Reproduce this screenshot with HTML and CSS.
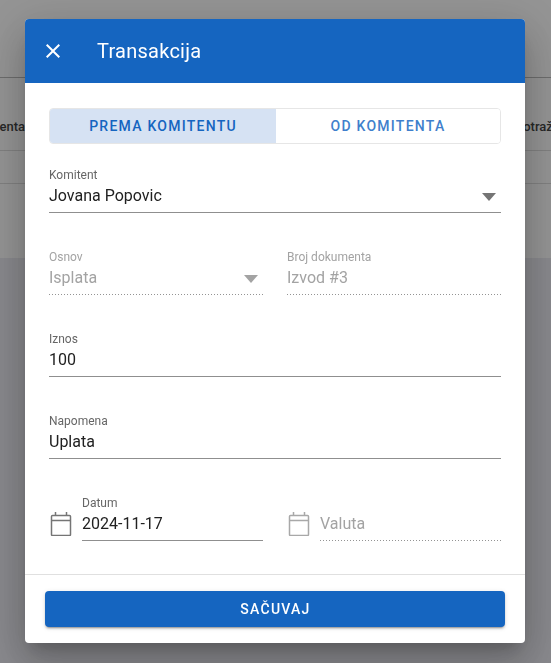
FILE: index.html
```html
<!DOCTYPE html>
<html lang="sr">
<head>
<meta charset="utf-8">
<title>Transakcija</title>
<link rel="stylesheet" href="styles.css">
</head>
<body>
<div class="page">
  <div class="page-top"></div>
  <div class="page-row page-row-head">
    <span class="cell cell-left">Komitenta</span>
    <span class="cell cell-right">Potražuje</span>
  </div>
  <div class="page-row page-row-sum"></div>
  <div class="page-row page-row-empty"></div>
</div>
<div class="overlay">
  <section class="dialog">
    <header class="dialog-head">
      <svg class="close-icon" viewBox="0 0 24 24" aria-hidden="true"><path d="M19 6.41 17.59 5 12 10.59 6.41 5 5 6.41 10.59 12 5 17.59 6.41 19 12 13.41 17.59 19 19 17.59 13.41 12z"/></svg>
      <h1 class="dialog-title">Transakcija</h1>
    </header>
    <div class="dialog-body">
      <div class="toggle">
        <button class="toggle-btn toggle-on">PREMA KOMITENTU</button>
        <button class="toggle-btn toggle-off">OD KOMITENTA</button>
      </div>
      <div class="form">
        <div class="field">
          <span class="label">Komitent</span>
          <div class="value-row"><span class="value">Jovana Popovic</span><span class="caret"></span></div>
        </div>
        <div class="split">
          <div class="field field-off">
            <span class="label">Osnov</span>
            <div class="value-row"><span class="value">Isplata</span><span class="caret"></span></div>
          </div>
          <div class="field field-off">
            <span class="label">Broj dokumenta</span>
            <div class="value-row"><span class="value">Izvod #3</span></div>
          </div>
        </div>
        <div class="field">
          <span class="label">Iznos</span>
          <div class="value-row"><span class="value">100</span></div>
        </div>
        <div class="field">
          <span class="label">Napomena</span>
          <div class="value-row"><span class="value">Uplata</span></div>
        </div>
        <div class="split">
          <div class="date">
            <svg class="cal-icon" viewBox="0 0 24 24" aria-hidden="true"><path d="M3.5 3.5h17a1 1 0 0 1 1 1v18a1 1 0 0 1-1 1h-17a1 1 0 0 1-1-1v-18a1 1 0 0 1 1-1zM2.5 8.5h19M6.5 0v3.5M17.5 0v3.5"/></svg>
            <div class="field">
              <span class="label">Datum</span>
              <div class="value-row"><span class="value">2024-11-17</span></div>
            </div>
          </div>
          <div class="date date-off">
            <svg class="cal-icon" viewBox="0 0 24 24" aria-hidden="true"><path d="M3.5 3.5h17a1 1 0 0 1 1 1v18a1 1 0 0 1-1 1h-17a1 1 0 0 1-1-1v-18a1 1 0 0 1 1-1zM2.5 8.5h19M6.5 0v3.5M17.5 0v3.5"/></svg>
            <div class="field field-off">
              <span class="label label-empty">&nbsp;</span>
              <div class="value-row"><span class="value">Valuta</span></div>
            </div>
          </div>
        </div>
      </div>
    </div>
    <footer class="dialog-foot">
      <button class="save">SAČUVAJ</button>
    </footer>
  </section>
</div>
</body>
</html>
```
FILE: styles.css
```css
* { box-sizing: border-box; }
html, body { margin: 0; height: 100%; }
body {
  font-family: Roboto, "Liberation Sans", sans-serif;
  background: #ebebf2;
  overflow: hidden;
}
.page { background: #fff; height: 258px; }
.page-top { height: 78px; border-bottom: 1px solid #bbb; }
.page-row { display: flex; justify-content: space-between; align-items: center; border-bottom: 1px solid #ddd; }
.page-row-head { height: 73px; padding-top: 24px; }
.page-row-sum { height: 33px; }
.cell { font-size: 13px; font-weight: 500; color: #444; white-space: nowrap; }
.cell-left { width: 25px; display: flex; justify-content: flex-end; }
.cell-right { width: 36px; }
.page-row-empty { border-bottom: 0; }

.overlay {
  position: fixed;
  inset: 0;
  padding: 0 1px 1px 0;
  background: rgba(0, 0, 0, .42);
  display: flex;
  justify-content: center;
  align-items: center;
}
.dialog {
  width: 500px;
  height: 624px;
  background: #fff;
  border-radius: 4px;
  display: flex;
  flex-direction: column;
  overflow: hidden;
  box-shadow: 0 11px 15px -7px rgba(0,0,0,.2), 0 24px 38px 3px rgba(0,0,0,.14), 0 9px 46px 8px rgba(0,0,0,.12);
}
.dialog-head {
  height: 64px;
  flex: none;
  background: #1565c0;
  color: #fff;
  display: flex;
  align-items: center;
  padding-left: 16px;
}
.close-icon { width: 24px; height: 24px; fill: #fff; }
.dialog-title { margin: 0 0 0 32px; font-size: 20px; font-weight: 400; letter-spacing: .25px; line-height: 1.6; }

.dialog-body { flex: 1; padding: 25px 24px 0; border-bottom: 1px solid #e0e0e0; }
.toggle { display: flex; height: 36px; border: 1px solid #e6e6e6; border-radius: 4px; overflow: hidden; }
.toggle-btn {
  border: 0;
  background: #fff;
  font: 500 14px Roboto, sans-serif;
  letter-spacing: 1.25px;
  padding: 0;
}
.toggle-on { flex: 0 0 226px; background: #d6e2f3; color: #1565c0; }
.toggle-off { flex: 1; color: #3f7fcc; }

.form { display: flex; flex-direction: column; gap: 37px; margin-top: 24px; }
.split { display: grid; grid-template-columns: 214px 214px; gap: 24px; }
.field { flex: 1; min-width: 0; display: flex; flex-direction: column; border-bottom: 1px solid #8f8f8f; }
.label { font-size: 12px; line-height: 14px; color: #666; }
.value-row { display: flex; justify-content: space-between; align-items: center; height: 30px; padding-bottom: 2px; }
.value { font-size: 16px; line-height: 28px; color: #212121; }
.caret {
  width: 0; height: 0;
  margin: 2px 5px 0 0;
  border-left: 7px solid transparent;
  border-right: 7px solid transparent;
  border-top: 8px solid #757575;
}
.field-off {
  border-bottom: 1px solid transparent;
  background: linear-gradient(to right, rgba(0,0,0,.42) 33%, transparent 0) left bottom / 3px 1px repeat-x;
  background-origin: border-box;
}
.field-off .label { color: #a3a3a3; }
.field-off .value { color: #a3a3a3; }
.field-off .caret { border-top-color: #a3a3a3; }

.date { display: flex; align-items: flex-end; gap: 9px; }
.cal-icon { width: 24px; height: 24px; flex: none; fill: none; stroke: #757575; stroke-width: 1.5; margin-bottom: 5px; }
.date-off .cal-icon { stroke: #a8a8a8; }

.dialog-foot { flex: none; height: 68px; padding: 16px 20px; }
.save {
  display: block;
  width: 100%;
  height: 36px;
  border: 0;
  border-radius: 4px;
  background: #1565c0;
  color: #fff;
  font: 500 14px Roboto, sans-serif;
  letter-spacing: 1.25px;
  padding: 0 0 0 1px;
  box-shadow: 0 3px 1px -2px rgba(0,0,0,.2), 0 2px 2px 0 rgba(0,0,0,.14), 0 1px 5px 0 rgba(0,0,0,.12);
}
```
